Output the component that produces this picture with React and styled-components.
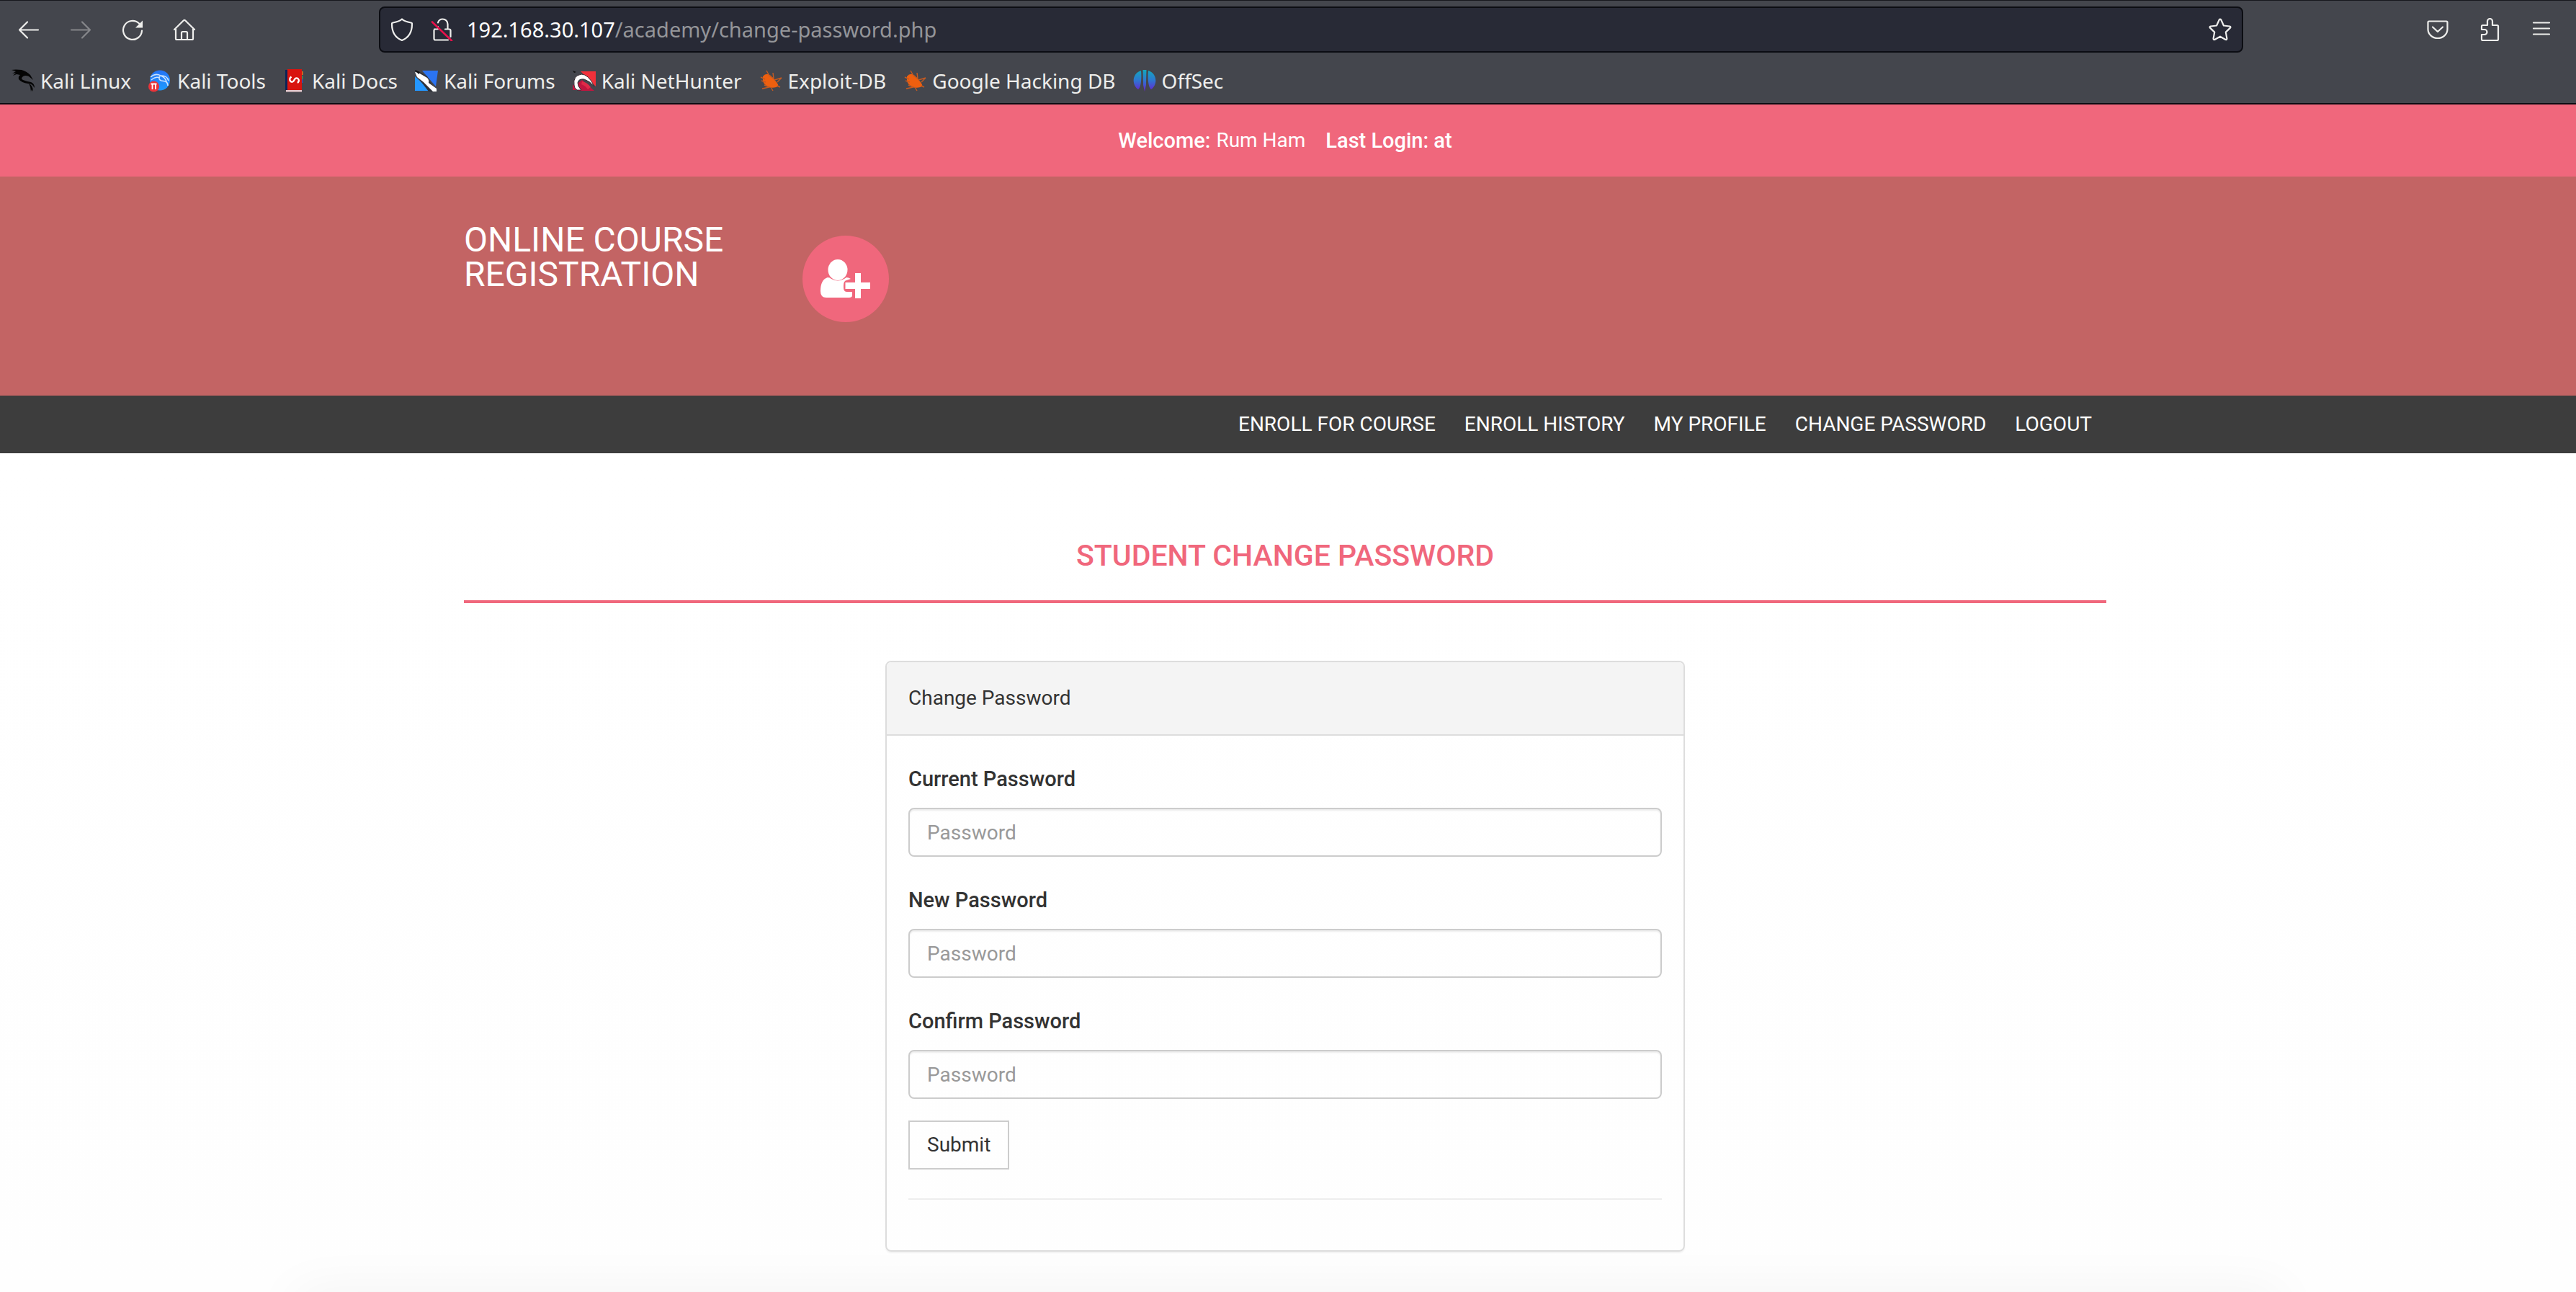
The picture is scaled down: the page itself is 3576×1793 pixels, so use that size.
import React from "react";
import styled, { createGlobalStyle } from "styled-components";

const GlobalStyle = createGlobalStyle`
  *, *::before, *::after { box-sizing: border-box; }
  body {
    margin: 0;
    background: #fff;
    color: #333;
    font: 400 28px/40px Roboto, "Liberation Sans", sans-serif;
  }
`;

const Screen = styled.div`
  display: flex;
  flex-direction: column;
  min-height: 100vh;
  overflow: hidden;
  background: linear-gradient(#fff 35%, #fefefe);
`;

/* ---------- Browser chrome ---------- */

const Chrome = styled.header`
  border-top: 1px solid #17181d;
  border-bottom: 2px solid #0c0d13;
  background: #44464d;
  color: #eeeeec;
  font-family: "Noto Sans", sans-serif;
`;

const Toolbar = styled.div`
  display: flex;
  align-items: center;
  padding: 8px 12px 8px 4px;
`;

const ToolGroup = styled.div`
  display: flex;
  flex: ${(p) => p.$flex} 1 0;
  justify-content: ${(p) => (p.$end ? "flex-end" : "flex-start")};
`;

const IconButton = styled.button`
  display: grid;
  place-items: center;
  width: ${(p) => p.$width || 72}px;
  height: 60px;
  padding: 0;
  border: 0;
  background: none;
  color: inherit;

  &:disabled { color: #85868a; }
`;

const AddressBar = styled.form`
  display: flex;
  align-items: center;
  width: 2588px;
  max-width: 73%;
  height: 64px;
  padding-left: 2px;
  border: 2px solid #0c0d13;
  border-radius: 8px;
  background: #282a36;
`;

const Address = styled.p`
  flex: 1;
  margin: 0 0 0 6px;
  color: #949599;
  font-size: 29px;
  line-height: 40px;
  white-space: nowrap;
`;

const Host = styled.span`
  color: #fff;
`;

const Bookmarks = styled.nav`
  display: flex;
  gap: 24px;
  padding: 12px 16px;
`;

const Bookmark = styled.a`
  display: flex;
  align-items: center;
  gap: 8px;
  color: inherit;
  font-size: 28px;
  line-height: 38px;
  text-decoration: none;
  white-space: nowrap;
`;

/* ---------- Site ---------- */

const Container = styled.div`
  width: 2280px;
  max-width: calc(100% - 60px);
  margin: 0 auto;
`;

const Site = styled.div`
  & > * { padding-right: 8px; }
`;

const LoginStrip = styled.div`
  display: flex;
  justify-content: center;
  gap: 28px;
  padding-top: 30px;
  padding-bottom: 30px;
  background: #f0677c;
  color: #fff;
`;

const Greeting = styled.span`
  display: flex;
  gap: 8px;
`;

const Masthead = styled.div`
  min-height: 304px;
  padding-top: 64px;
  background: #c36464;
`;

const Brand = styled(Container)`
  display: flex;
`;

const SiteName = styled.a`
  width: 470px;
  color: #fff;
  font-size: 48px;
  line-height: 48px;
  text-decoration: none;
  text-transform: uppercase;
`;

const Badge = styled.span`
  display: grid;
  place-items: center;
  width: 120px;
  height: 120px;
  margin-top: 18px;
  border-radius: 50%;
  background: #f0677c;
  color: #fff;
`;

const MenuBar = styled.nav`
  background: #3d3d3d;
`;

const Menu = styled(Container)`
  display: flex;
  justify-content: flex-end;
`;

const MenuLink = styled.a`
  padding: 20px;
  color: #fff;
  text-decoration: none;
  text-transform: uppercase;
`;

const PageTitle = styled.h1`
  margin: 110px 0 80px;
  padding: 20px 0 50px;
  border-bottom: 4px solid #f0677c;
  color: #f0677c;
  font-size: 41px;
  font-weight: 500;
  line-height: 24px;
  text-align: center;
  text-transform: uppercase;
`;

const Panel = styled.section`
  width: 1110px;
  max-width: 100%;
  margin: 0 auto;
  border: 2px solid #ddd;
  border-radius: 8px;
  box-shadow: 0 2px 2px rgba(0, 0, 0, 0.05);
`;

const PanelHeading = styled.h2`
  margin: 0;
  padding: 30px;
  border-bottom: 2px solid #ddd;
  border-radius: 6px 6px 0 0;
  background: #f4f4f4;
  font-size: 28px;
  font-weight: 400;
  line-height: 40px;
`;

const PanelForm = styled.form`
  display: flex;
  flex-direction: column;
  align-items: flex-start;
  padding: 40px 30px 70px;
`;

const Field = styled.div`
  display: flex;
  flex-direction: column;
  gap: 20px;
  width: 100%;
  margin-bottom: ${(p) => (p.$last ? 30 : 40)}px;
`;

const Label = styled.label`
  font-size: 29px;
  font-weight: 500;
`;

const Input = styled.input`
  width: 100%;
  height: 68px;
  padding: 0 24px;
  border: 2px solid #ccc;
  border-radius: 8px;
  background: transparent;
  box-shadow: inset 0 2px 2px rgba(0, 0, 0, 0.075);
  font: inherit;

  &::placeholder { color: #999; }
`;

const Submit = styled.button`
  height: 68px;
  padding: 0 24px;
  border: 2px solid #ccc;
  background: transparent;
  color: #333;
  font: inherit;
`;

const Divider = styled.hr`
  width: 100%;
  margin: 40px 0 0;
  border: 0;
  border-top: 2px solid #eee;
`;

const FooterEdge = styled.footer`
  height: 2px;
  margin: auto 440px -2px;
  box-shadow: 0 30px 72px 30px rgba(0, 0, 0, 0.05);
`;

/* ---------- Icons ---------- */

const Glyph = ({ children, size = 32 }) => (
  <svg
    width={size}
    height={size}
    viewBox="0 0 32 32"
    fill="none"
    stroke="currentColor"
    strokeWidth="2.2"
    strokeLinecap="round"
    strokeLinejoin="round"
    aria-hidden="true"
  >
    {children}
  </svg>
);

const BackIcon = () => (
  <Glyph><path d="M29 16.500H3M14 5.500L3 16.500l11 11" /></Glyph>
);
const ForwardIcon = () => (
  <Glyph><path d="M3 16.500h26M18 5.500l11 11-11 11" /></Glyph>
);
const ReloadIcon = () => (
  <Glyph>
    <path d="M25 7.500A13 13 0 1 0 29 17.500" />
    <path d="M30 3.500v10H20z" fill="currentColor" stroke="none" />
  </Glyph>
);
const HomeIcon = () => (
  <Glyph>
    <path d="M2 16L15 3.300q1-1 2 0L30 16M4 15v13.500q0 1.500 1.500 1.500h21q1.500 0 1.500-1.500V15M12 30V20.500q0-1.500 1.500-1.500h5q1.500 0 1.500 1.500V30" />
  </Glyph>
);
const ShieldIcon = () => (
  <Glyph>
    <path d="M16 1.500C18.500 4 23 5.500 28.500 6.500c1 0 1.500.7 1.500 1.700C30 19 26 27 16 31 6 27 2 19 2 8.200c0-1 .5-1.700 1.500-1.700C9 5.500 13.500 4 16 1.500z" />
  </Glyph>
);
const InsecureIcon = () => (
  <Glyph>
    <path d="M10 6.500C11 3 13.500 1.500 16.500 1.500c4 0 7 3 7 7V15M20 15.500h5.500q2 0 2 2V26M5 15.500h3M4.500 17v11.500q0 2 2 2H24M10 12v3.500" />
    <path d="M2 5.500L29 31.500" stroke="#e8114b" strokeWidth="2.600" />
  </Glyph>
);
const StarIcon = () => (
  <Glyph>
    <path d="M14.700 2.500q1.300-1.800 2.600 0l3.600 8 8.300 1q2 .5.800 2.100l-6.200 6 1.600 8.900q0 2-1.800 1.500L16 25.700 8.400 30q-1.800.5-1.800-1.500l1.600-8.900-6.200-6q-1.200-1.600.8-2.100l8.300-1z" />
  </Glyph>
);
const PocketIcon = () => (
  <Glyph>
    <path d="M4 4.500h24q1.500 0 1.500 1.500v9.500a13.500 12.500 0 0 1-27 0V6q0-1.500 1.500-1.500zM9 12.500l7 6.500 7-6.500" />
  </Glyph>
);
const ExtensionIcon = () => (
  <Glyph>
    <path d="M13 10V4.500a3.500 3.500 0 0 1 7 0V10h6.500q1.500 0 1.500 1.500v18q0 1.500-1.500 1.500h-20Q5 31 5 29.500V23h4a3.500 3.500 0 0 0 0-7H5v-4.500Q5 10 6.500 10z" />
  </Glyph>
);
const MenuIcon = () => (
  <Glyph><path d="M5 6.500h22M5 14.500h22M5 22.500h22" /></Glyph>
);

const Favicon = ({ children }) => (
  <svg width="32" height="32" viewBox="0 0 32 32" aria-hidden="true">{children}</svg>
);

const KaliLinuxIcon = () => (
  <Favicon>
    <path d="M0 1l6-.5L14 1q7 2 12 7l4 7-6-5q-5-2-8 0-4 3 0 5 5 2 11 3 5 2 5 8l-3-4q-2-2-6-2-9-1-13-6-1-4 2-6L7 7 2 9l4-4-5 1 5-3z" fill="#050505" />
    <path d="M24 20q6 3 6 11l-2-3-1 3q0-6-3-11z" fill="#050505" />
  </Favicon>
);
const KaliToolsIcon = () => (
  <Favicon>
    <defs>
      <linearGradient id="tools" x2="0" y2="1">
        <stop stopColor="#2673f5" /><stop offset="1" stopColor="#1e9bff" />
      </linearGradient>
    </defs>
    <circle cx="16" cy="15.500" r="14" fill="url(#tools)" />
    <path d="M3 11q7-6 14-2 6 2 8 8M4 15q4-4 11-4M18 9q8 0 10 7M16 10q-3 4 2 6l6 1q3 2 3 6" fill="none" stroke="#cbe2ff" strokeWidth="1.600" />
    <circle cx="7.500" cy="24" r="7.500" fill="#ea3339" />
    <path d="M3.500 20.500h8M5.500 21v7M10 21v7" stroke="#fff" strokeWidth="1.800" fill="none" />
  </Favicon>
);
const KaliDocsIcon = () => (
  <Favicon>
    <path d="M3 1h3v28H3z" fill="#0b2458" />
    <path d="M6 0h20v29H6z" fill="#d9140f" />
    <path d="M4 29h22v2.500H4z" fill="#e6c9cd" />
    <path d="M26 3h1.500v5H26z" fill="#e8711c" /><path d="M26 9h1.500v5H26z" fill="#4a8a5a" /><path d="M26 14h1.500v5H26z" fill="#3a4fae" />
    <path d="M11.500 10.500q-4 3-1 6.500 3 2 5-2 2-4 5-2 3 3-.5 6" fill="none" stroke="#fff" strokeWidth="2.400" />
  </Favicon>
);
const KaliForumsIcon = () => (
  <Favicon>
    <path d="M10 2h22l-3 22z" fill="#2b74f2" />
    <path d="M0 10v20h22z" fill="#2497ff" />
    <path d="M0 1l7 3 10 6 5 9 8 12H19L2 9z" fill="#2e3138" />
    <path d="M0 4l5 1 12 7q3 3 2 7l11 8v4h-5L12 18 3 11z" fill="#fff" />
    <path d="M0 1l7 3-2 3z" fill="#111" />
  </Favicon>
);
const KaliNetHunterIcon = () => (
  <Favicon>
    <path d="M11 3h21v21z" fill="#f1303a" />
    <path d="M0 21l8 8H0zM8 30l-3-9 8-6 17 15z" fill="#c0163f" />
    <path d="M2 22Q0 9 12 7q10 0 18 17-7-8-14-10-8-1-9 5 0 5 5 10H6q-4-3-4-7z" fill="#fff" stroke="#372b33" strokeWidth="1" />
    <path d="M13 17q7 1 12 8l-4 3q-3-5-9-7z" fill="#e02a48" />
    <path d="M0 2l5 2-3 1z" fill="#111" />
  </Favicon>
);
const BugIcon = () => (
  <Favicon>
    <path d="M5 10q5-6 11-1l8 9q3 4 2 6-6 3-12 1-9-4-9-10z" fill="#ee5f0f" />
    <path d="M10 2l4 7 6 4-1-8M2 11l6 3M3 16l6 2M4 27l10-2-7-3M21 15l10-3-6 6M16 25l3 5M25 23l4 2" fill="none" stroke="#c35a22" strokeWidth="1.400" />
  </Favicon>
);
const OffSecIcon = () => (
  <Favicon>
    <defs>
      <linearGradient id="offsec" gradientUnits="userSpaceOnUse" x1="16" y1="1" x2="16" y2="31">
        <stop stopColor="#12a9bd" /><stop offset=".5" stopColor="#2f74d0" /><stop offset="1" stopColor="#6a1fd0" />
      </linearGradient>
    </defs>
    <path d="M11 2C-2 6-2 22 7 28 11 26 12 12 11 2zM21 2C34 6 34 22 25 28 21 26 20 12 21 2zM13.500 1h5Q18 14 18 22l-2 9-2-9Q14 14 13.500 1z" fill="url(#offsec)" />
  </Favicon>
);

const UserPlusIcon = () => (
  <svg width="70" height="54" viewBox="0 0 70 54" fill="currentColor" aria-hidden="true">
    <ellipse cx="24" cy="14.500" rx="13.500" ry="14.500" />
    <path d="M10 25q3 0 5 2 9 5 18 0l3-2q3 0 6 2l-6 2q-4 1-4 7v3q0 6 5 6h7v6q-1 2-4 2H8Q0 53 0 44 0 28 10 25z" />
    <path d="M48 19h8v13h13v9H56v13h-8V41H34.500v-9H48z" />
  </svg>
);

/* ---------- Page ---------- */

const bookmarks = [
  ["Kali Linux", KaliLinuxIcon],
  ["Kali Tools", KaliToolsIcon],
  ["Kali Docs", KaliDocsIcon],
  ["Kali Forums", KaliForumsIcon],
  ["Kali NetHunter", KaliNetHunterIcon],
  ["Exploit-DB", BugIcon],
  ["Google Hacking DB", BugIcon],
  ["OffSec", OffSecIcon],
];

const menu = ["Enroll for Course", "Enroll History", "My Profile", "Change Password", "Logout"];

const fields = [
  ["current", "Current Password"],
  ["new", "New Password"],
  ["confirm", "Confirm Password"],
];

export default function App() {
  return (
    <Screen>
      <GlobalStyle />
      <Chrome>
        <Toolbar>
          <ToolGroup $flex={522}>
            <IconButton aria-label="Back"><BackIcon /></IconButton>
            <IconButton aria-label="Forward" disabled><ForwardIcon /></IconButton>
            <IconButton aria-label="Reload"><ReloadIcon /></IconButton>
            <IconButton aria-label="Home"><HomeIcon /></IconButton>
          </ToolGroup>
          <AddressBar>
            <IconButton type="button" $width={56} aria-label="Tracking protection"><ShieldIcon /></IconButton>
            <IconButton type="button" $width={56} aria-label="Connection not secure"><InsecureIcon /></IconButton>
            <Address><Host>192.168.30.107</Host>/academy/change-password.php</Address>
            <IconButton type="button" $width={60} aria-label="Bookmark this page"><StarIcon /></IconButton>
          </AddressBar>
          <ToolGroup $flex={450} $end>
            <IconButton aria-label="Save to Pocket"><PocketIcon /></IconButton>
            <IconButton aria-label="Extensions"><ExtensionIcon /></IconButton>
            <IconButton aria-label="Application menu"><MenuIcon /></IconButton>
          </ToolGroup>
        </Toolbar>
        <Bookmarks aria-label="Bookmarks">
          {bookmarks.map(([name, Icon]) => (
            <Bookmark href="#" key={name}><Icon />{name}</Bookmark>
          ))}
        </Bookmarks>
      </Chrome>

      <Site>
        <LoginStrip>
          <Greeting><Label as="strong">Welcome:</Label><span>Rum Ham</span></Greeting>
          <Label as="strong">Last Login: at</Label>
        </LoginStrip>
        <Masthead>
          <Brand>
            <SiteName href="#">Online Course Registration</SiteName>
            <Badge><UserPlusIcon /></Badge>
          </Brand>
        </Masthead>
        <MenuBar aria-label="Main">
          <Menu>
            {menu.map((item) => <MenuLink href="#" key={item}>{item}</MenuLink>)}
          </Menu>
        </MenuBar>
        <main>
          <Container>
            <PageTitle>Student Change Password</PageTitle>
            <Panel>
              <PanelHeading>Change Password</PanelHeading>
              <PanelForm>
                {fields.map(([id, label], i) => (
                  <Field key={id} $last={i === fields.length - 1}>
                    <Label htmlFor={id}>{label}</Label>
                    <Input id={id} type="password" placeholder="Password" />
                  </Field>
                ))}
                <Submit type="button">Submit</Submit>
                <Divider />
              </PanelForm>
            </Panel>
          </Container>
        </main>
      </Site>
      <FooterEdge />
    </Screen>
  );
}
